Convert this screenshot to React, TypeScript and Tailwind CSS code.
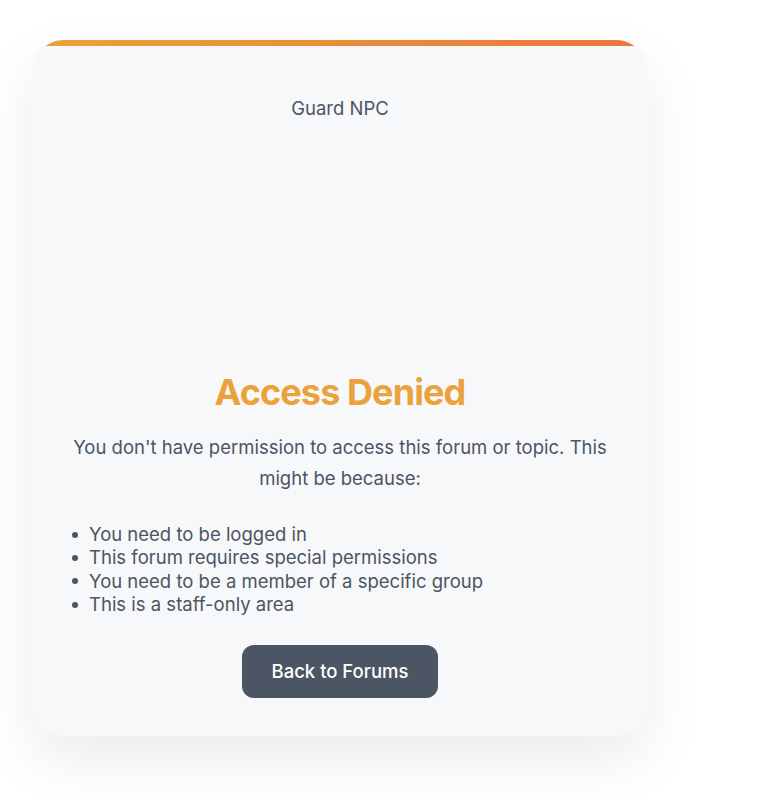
export default function App() {
  const reasons = [
    "You need to be logged in",
    "This forum requires special permissions",
    "You need to be a member of a specific group",
    "This is a staff-only area",
  ];
  return (
    <div className="min-h-screen bg-white pl-8 pt-10 font-['Inter',sans-serif]">
      <div className="w-[616px] overflow-hidden rounded-[32px] bg-[#f7f8fa] shadow-[0_24px_60px_rgba(0,0,0,0.08)]">
        <div className="h-1.5 bg-gradient-to-r from-[#eba23a] to-[#e8773a]" />
        <div className="flex flex-col items-center px-10 pb-[38px] pt-10">
          <div className="h-64 w-64 pt-[9px] text-center text-[18.5px] text-[#4b5563]">Guard NPC</div>
          <h1 className="mt-[30px] text-4xl font-bold leading-10 tracking-tight text-[#eba23a]">Access Denied</h1>
          <p className="mt-5 text-center text-[18.5px] leading-[31px] text-[#4b5563]">
            You don't have permission to access this forum or topic. This might be because:
          </p>
          <ul className="mt-[29px] w-full text-[18.5px] leading-[23.3px] text-[#4b5563]">
            {reasons.map((r) => (
              <li key={r} className="flex items-center">
                <span className="flex w-[17px] shrink-0">
                  <span className="h-1.5 w-1.5 rounded-full bg-[#4b5563]" />
                </span>
                {r}
              </li>
            ))}
          </ul>
          <button className="mt-[29px] rounded-xl bg-[#4b5563] px-[30px] py-3.5 text-[18.5px] font-medium leading-[25px] text-white">
            Back to Forums
          </button>
        </div>
      </div>
    </div>
  );
}
